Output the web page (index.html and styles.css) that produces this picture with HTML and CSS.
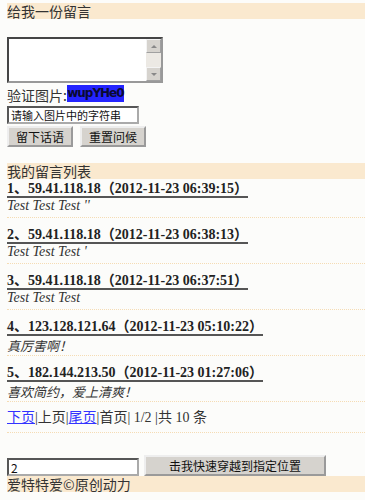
FILE: index.html
```
<!DOCTYPE html>
<html lang="zh-CN">
<head>
    <meta charset="UTF-8">
    <title>留言板</title>
    <link rel="stylesheet" href="styles.css">
</head>
<body>
    <div class="bar">给我一份留言</div>
    <form class="post">
        <div class="msgbox">
            <textarea class="msg"></textarea>
            <div class="sbar">
                <span class="arrow up"></span>
                <span class="track"></span>
                <span class="arrow down"></span>
            </div>
        </div>
        <div class="code">验证图片:<span class="captcha">wupYHe0</span></div>
        <input type="text" class="txt" value="请输入图片中的字符串">
        <div class="btns">
            <button type="button" class="btn">留下话语</button>
            <button type="reset" class="btn">重置问候</button>
        </div>
    </form>

    <div class="bar">我的留言列表</div>
    <div class="item">
        <span class="head">1、59.41.118.18（2012-11-23 06:39:15）</span>
        <div class="body">Test Test Test ''</div>
    </div>
    <div class="item">
        <span class="head">2、59.41.118.18（2012-11-23 06:38:13）</span>
        <div class="body">Test Test Test '</div>
    </div>
    <div class="item">
        <span class="head">3、59.41.118.18（2012-11-23 06:37:51）</span>
        <div class="body">Test Test Test</div>
    </div>
    <div class="item">
        <span class="head">4、123.128.121.64（2012-11-23 05:10:22）</span>
        <div class="body cn">真厉害啊！</div>
    </div>
    <div class="item">
        <span class="head">5、182.144.213.50（2012-11-23 01:27:06）</span>
        <div class="body cn">喜欢简约，爱上清爽！</div>
    </div>

    <div class="pager">
        <a href="#">下页</a>|上页|<a href="#">尾页</a>|首页| 1/2 |共 10 条
    </div>

    <div class="jump">
        <input type="text" class="txt" value="2">
        <button type="button" class="btn go">击我快速穿越到指定位置</button>
    </div>
    <div class="bar">爱特特爱©原创动力</div>
</body>
</html>
```

FILE: styles.css
```
body{
    margin:0;
    padding:3px 0 0 7px;
    background-color:#fcfcfa;
    color:#333;
    font-family:"Liberation Serif","Noto Sans CJK SC",serif;
    font-size:14px;
}
.bar{
    height:16px;
    line-height:16px;
    background-color:#fae9cf;
    font-family:"Noto Sans CJK SC",sans-serif;
    font-size:14px;
    color:#333;
}
.post{
    margin:18px 0 0 0;
}
.msgbox{
    display:flex;
    box-sizing:border-box;
    width:156px;
    height:46px;
    border:2px inset #999;
    background:#fff;
}
.msg{
    flex:1;
    margin:0;
    padding:0;
    border:none;
    background:#fff;
    overflow:hidden;
    resize:none;
}
.sbar{
    display:flex;
    flex-direction:column;
    width:15px;
    background-color:#ece9e4;
}
.arrow{
    box-sizing:border-box;
    display:flex;
    align-items:center;
    justify-content:center;
    height:14px;
    background-color:#d6d3ce;
    border:1px outset #f4f4f4;
}
.arrow::after{
    content:"";
    border-left:3px solid transparent;
    border-right:3px solid transparent;
}
.up::after{
    border-bottom:3px solid #888;
}
.down::after{
    border-top:3px solid #888;
}
.track{
    flex:1;
}
.code{
    height:22px;
    line-height:24px;
    font-family:"Noto Sans CJK SC",sans-serif;
    font-size:14px;
}
.captcha{
    display:inline-block;
    vertical-align:top;
    margin-top:2px;
    width:57px;
    height:17px;
    line-height:17px;
    background-color:#2424ff;
    color:#0a0a30;
    font-family:"DejaVu Sans",sans-serif;
    font-weight:bold;
    font-size:12px;
    letter-spacing:-1px;
    text-align:center;
}
.txt{
    box-sizing:border-box;
    width:132px;
    height:18px;
    margin:1px 0 0 0;
    padding:0 2px;
    border:2px inset #aaa;
    background:#fff;
    font-family:"Noto Sans CJK SC",sans-serif;
    font-size:11px;
    color:#111;
}
.btns{
    display:flex;
    gap:7px;
    margin:2px 0 16px 0;
}
.btn{
    height:21px;
    width:66px;
    padding:0;
    background-color:#d6d3ce;
    border:2px outset #eee;
    font-family:"Noto Sans CJK SC",sans-serif;
    font-size:12px;
    color:#111;
}
.item{
    height:36px;
    padding-top:2px;
    margin-bottom:7px;
    border-bottom:1px dotted #f5dcb4;
}
.head{
    font-weight:bold;
    font-size:14px;
    color:#222;
    border-bottom:2px solid #555;
    line-height:14px;
}
.body{
    margin-top:1px;
    font-style:italic;
    font-size:14px;
    color:#333;
}
.cn{
    font-family:"Noto Sans CJK SC",sans-serif;
    font-size:13px;
}
.pager{
    height:23px;
    line-height:18px;
    border-bottom:1px dotted #f5dcb4;
    font-family:"Liberation Serif","Noto Sans CJK SC",serif;
    font-size:14px;
}
.pager a{
    color:#3333ff;
}
.jump{
    display:flex;
    gap:5px;
    align-items:flex-end;
    margin-top:22px;
}
.jump .txt{
    font-size:12px;
    margin:0;
}
.go{
    width:182px;
}
```
